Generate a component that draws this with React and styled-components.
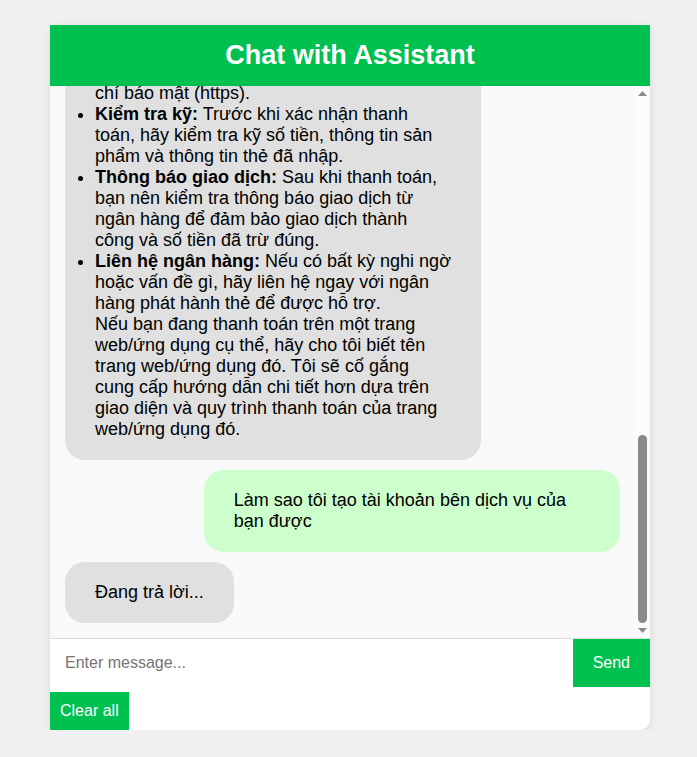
import React, { useEffect, useRef, useState } from 'react';
import styled, { createGlobalStyle } from 'styled-components';

const GlobalStyle = createGlobalStyle`
  html, body {
    margin: 0;
    padding: 0;
    background: #f0f0f0;
    font-family: "Liberation Sans", Arial, sans-serif;
  }
`;

const history = [
  { from: 'user', text: 'Xin chào' },
  { from: 'bot', text: 'Xin chào! Tôi là trợ lý ảo. Tôi có thể giúp gì cho bạn hôm nay?' },
  { from: 'user', text: 'Bạn có thể giúp gì cho tôi?' },
  {
    from: 'bot',
    text:
      'Tôi có thể hỗ trợ bạn trong nhiều vấn đề khác nhau, chẳng hạn như: tra cứu thông tin sản phẩm và dịch vụ, hướng dẫn đăng ký và đăng nhập tài khoản, giải đáp các câu hỏi thường gặp về đơn hàng, vận chuyển, đổi trả, hướng dẫn các phương thức thanh toán như thẻ tín dụng, ví điện tử, chuyển khoản ngân hàng, cũng như tiếp nhận phản hồi và góp ý của bạn để chúng tôi phục vụ tốt hơn. Bạn cần tôi hỗ trợ vấn đề gì?',
  },
  { from: 'user', text: 'Hướng dẫn tôi cách thanh toán bằng thẻ tín dụng' },
  {
    from: 'bot',
    intro: 'Để thanh toán bằng thẻ tín dụng, bạn có thể làm theo các bước sau:',
    steps: [
      ['Chọn sản phẩm/dịch vụ:', 'Thêm sản phẩm vào giỏ hàng và tiến hành thanh toán.'],
      ['Chọn phương thức thanh toán:', 'Chọn "Thẻ tín dụng/ghi nợ" trong danh sách phương thức thanh toán.'],
      ['Nhập thông tin thẻ:', 'Điền số thẻ, tên chủ thẻ, ngày hết hạn và mã CVV ở mặt sau thẻ.'],
      ['Xác thực giao dịch:', 'Nhập mã OTP được gửi đến số điện thoại đăng ký với ngân hàng.'],
    ],
    middle: 'Một số lưu ý khi thanh toán:',
    tips: [
      ['Bảo mật thông tin:', 'Không chia sẻ mã OTP, mã CVV hoặc mật khẩu cho bất kỳ ai.'],
      ['Kiểm tra trang web:', 'Chỉ thanh toán trên trang web uy tín, có biểu tượng ổ khóa và chí báo mật (https).'],
      ['Kiểm tra kỹ:', 'Trước khi xác nhận thanh toán, hãy kiểm tra kỹ số tiền, thông tin sản phẩm và thông tin thẻ đã nhập.'],
      ['Thông báo giao dịch:', 'Sau khi thanh toán, bạn nên kiểm tra thông báo giao dịch từ ngân hàng để đảm bảo giao dịch thành công và số tiền đã trừ đúng.'],
      ['Liên hệ ngân hàng:', 'Nếu có bất kỳ nghi ngờ hoặc vấn đề gì, hãy liên hệ ngay với ngân hàng phát hành thẻ để được hỗ trợ.'],
    ],
    outro:
      'Nếu bạn đang thanh toán trên một trang web/ứng dụng cụ thể, hãy cho tôi biết tên trang web/ứng dụng đó. Tôi sẽ cố gắng cung cấp hướng dẫn chi tiết hơn dựa trên giao diện và quy trình thanh toán của trang web/ứng dụng đó.',
  },
  { from: 'user', text: 'Làm sao tôi tạo tài khoản bên dịch vụ của bạn được' },
  { from: 'bot', text: 'Đang trả lời...' },
];

const RichReply = ({ msg }) => (
  <>
    <Line>{msg.intro}</Line>
    <Steps>
      {msg.steps.map(([label, body]) => (
        <li key={label}>
          <b>{label}</b> {body}
        </li>
      ))}
    </Steps>
    <Line>{msg.middle}</Line>
    <Tips>
      {msg.tips.map(([label, body]) => (
        <li key={label}>
          <b>{label}</b> {body}
        </li>
      ))}
    </Tips>
    <Line>{msg.outro}</Line>
  </>
);

const Arrow = ({ down }) => (
  <svg width="15" height="15" viewBox="0 0 15 15">
    <polygon points={down ? '3,5 12,5 7.5,10' : '3,10 12,10 7.5,5'} fill="#8a8a8a" />
  </svg>
);

const App = () => {
  const [text, setText] = useState('');
  const [thumb, setThumb] = useState({ top: 0, height: 0 });
  const listRef = useRef(null);
  const trackRef = useRef(null);

  const syncThumb = () => {
    const el = listRef.current;
    const track = trackRef.current;
    if (!el || !track) return;
    const trackH = track.clientHeight;
    const h = Math.max(20, (el.clientHeight / el.scrollHeight) * trackH);
    const maxScroll = el.scrollHeight - el.clientHeight;
    const top = maxScroll > 0 ? (el.scrollTop / maxScroll) * (trackH - h) : 0;
    setThumb({ top, height: h });
  };

  useEffect(() => {
    // always show the latest message
    if (listRef.current) listRef.current.scrollTop = listRef.current.scrollHeight;
    syncThumb();
  }, []);

  return (
    <>
      <GlobalStyle />
      <ChatBox>
        <Header>Chat with Assistant</Header>
        <MessagePane>
          <Messages ref={listRef} onScroll={syncThumb}>
            {history.map((msg, i) => (
              <Bubble key={i} $user={msg.from === 'user'}>
                {msg.steps ? <RichReply msg={msg} /> : msg.text}
              </Bubble>
            ))}
          </Messages>
          <ScrollRail>
            <Arrow />
            <Track ref={trackRef}>
              <Thumb style={{ marginTop: thumb.top, height: thumb.height }} />
            </Track>
            <Arrow down />
          </ScrollRail>
        </MessagePane>
        <InputRow>
          <MessageInput
            placeholder="Enter message..."
            value={text}
            onChange={(e) => setText(e.target.value)}
          />
          <GreenButton>Send</GreenButton>
        </InputRow>
        <ClearButton>Clear all</ClearButton>
      </ChatBox>
    </>
  );
};

const ChatBox = styled.div`
  width: 600px;
  margin: 25px 0 0 50px;
  background: #fff;
  border-radius: 10px;
  box-shadow: 0 2px 10px rgba(0, 0, 0, 0.1);
  display: flex;
  flex-direction: column;
`;

const Header = styled.div`
  height: 61px;
  background: #00c050;
  color: #fff;
  font-size: 27px;
  font-weight: 700;
  display: flex;
  align-items: center;
  justify-content: center;
`;

const MessagePane = styled.div`
  display: flex;
  height: 552px;
  background: #f9f9f9;
`;

const Messages = styled.div`
  flex: 1;
  box-sizing: border-box;
  overflow-y: auto;
  scrollbar-width: none;
  padding: 15px;
  display: flex;
  flex-direction: column;
  gap: 10px;

  &::-webkit-scrollbar {
    display: none;
  }
`;

const ScrollRail = styled.div`
  width: 15px;
  flex-shrink: 0;
  background: #fbfbfb;
  display: flex;
  flex-direction: column;

  svg {
    display: block;
    flex-shrink: 0;
  }
`;

const Track = styled.div`
  flex: 1;
  display: flex;
  flex-direction: column;
`;

const Thumb = styled.div`
  width: 9px;
  margin-left: 3px;
  border-radius: 5px;
  background: #8a8a8a;
`;

const Bubble = styled.div`
  max-width: 75%;
  box-sizing: border-box;
  align-self: ${(p) => (p.$user ? 'flex-end' : 'flex-start')};
  background: ${(p) => (p.$user ? '#ccffcc' : '#e0e0e0')};
  color: #000;
  padding: 20px 30px;
  border-radius: 20px;
  font-size: 18px;
  line-height: 21px;
`;

const Line = styled.div``;

const Steps = styled.ol`
  margin: 0;
  padding: 0;
`;

const Tips = styled.ul`
  margin: 0;
  padding: 0;
`;

const InputRow = styled.div`
  display: flex;
  border-top: 1px solid #ddd;
  height: 49px;
  box-sizing: border-box;
`;

const MessageInput = styled.input`
  flex: 1;
  border: none;
  outline: none;
  padding: 0 15px;
  font-size: 16px;
  font-family: "Liberation Sans", Arial, sans-serif;
  color: #000;
  background: #fff;

  &::placeholder {
    color: #757575;
  }
`;

const GreenButton = styled.button`
  border: none;
  border-radius: 0;
  background: #00c050;
  color: #fff;
  font-size: 16px;
  font-family: "Liberation Sans", Arial, sans-serif;
  padding: 0 20px;
  cursor: pointer;
`;

const ClearButton = styled(GreenButton)`
  align-self: flex-start;
  margin-top: 5px;
  height: 38px;
  padding: 0 10px;
`;

export default App;
